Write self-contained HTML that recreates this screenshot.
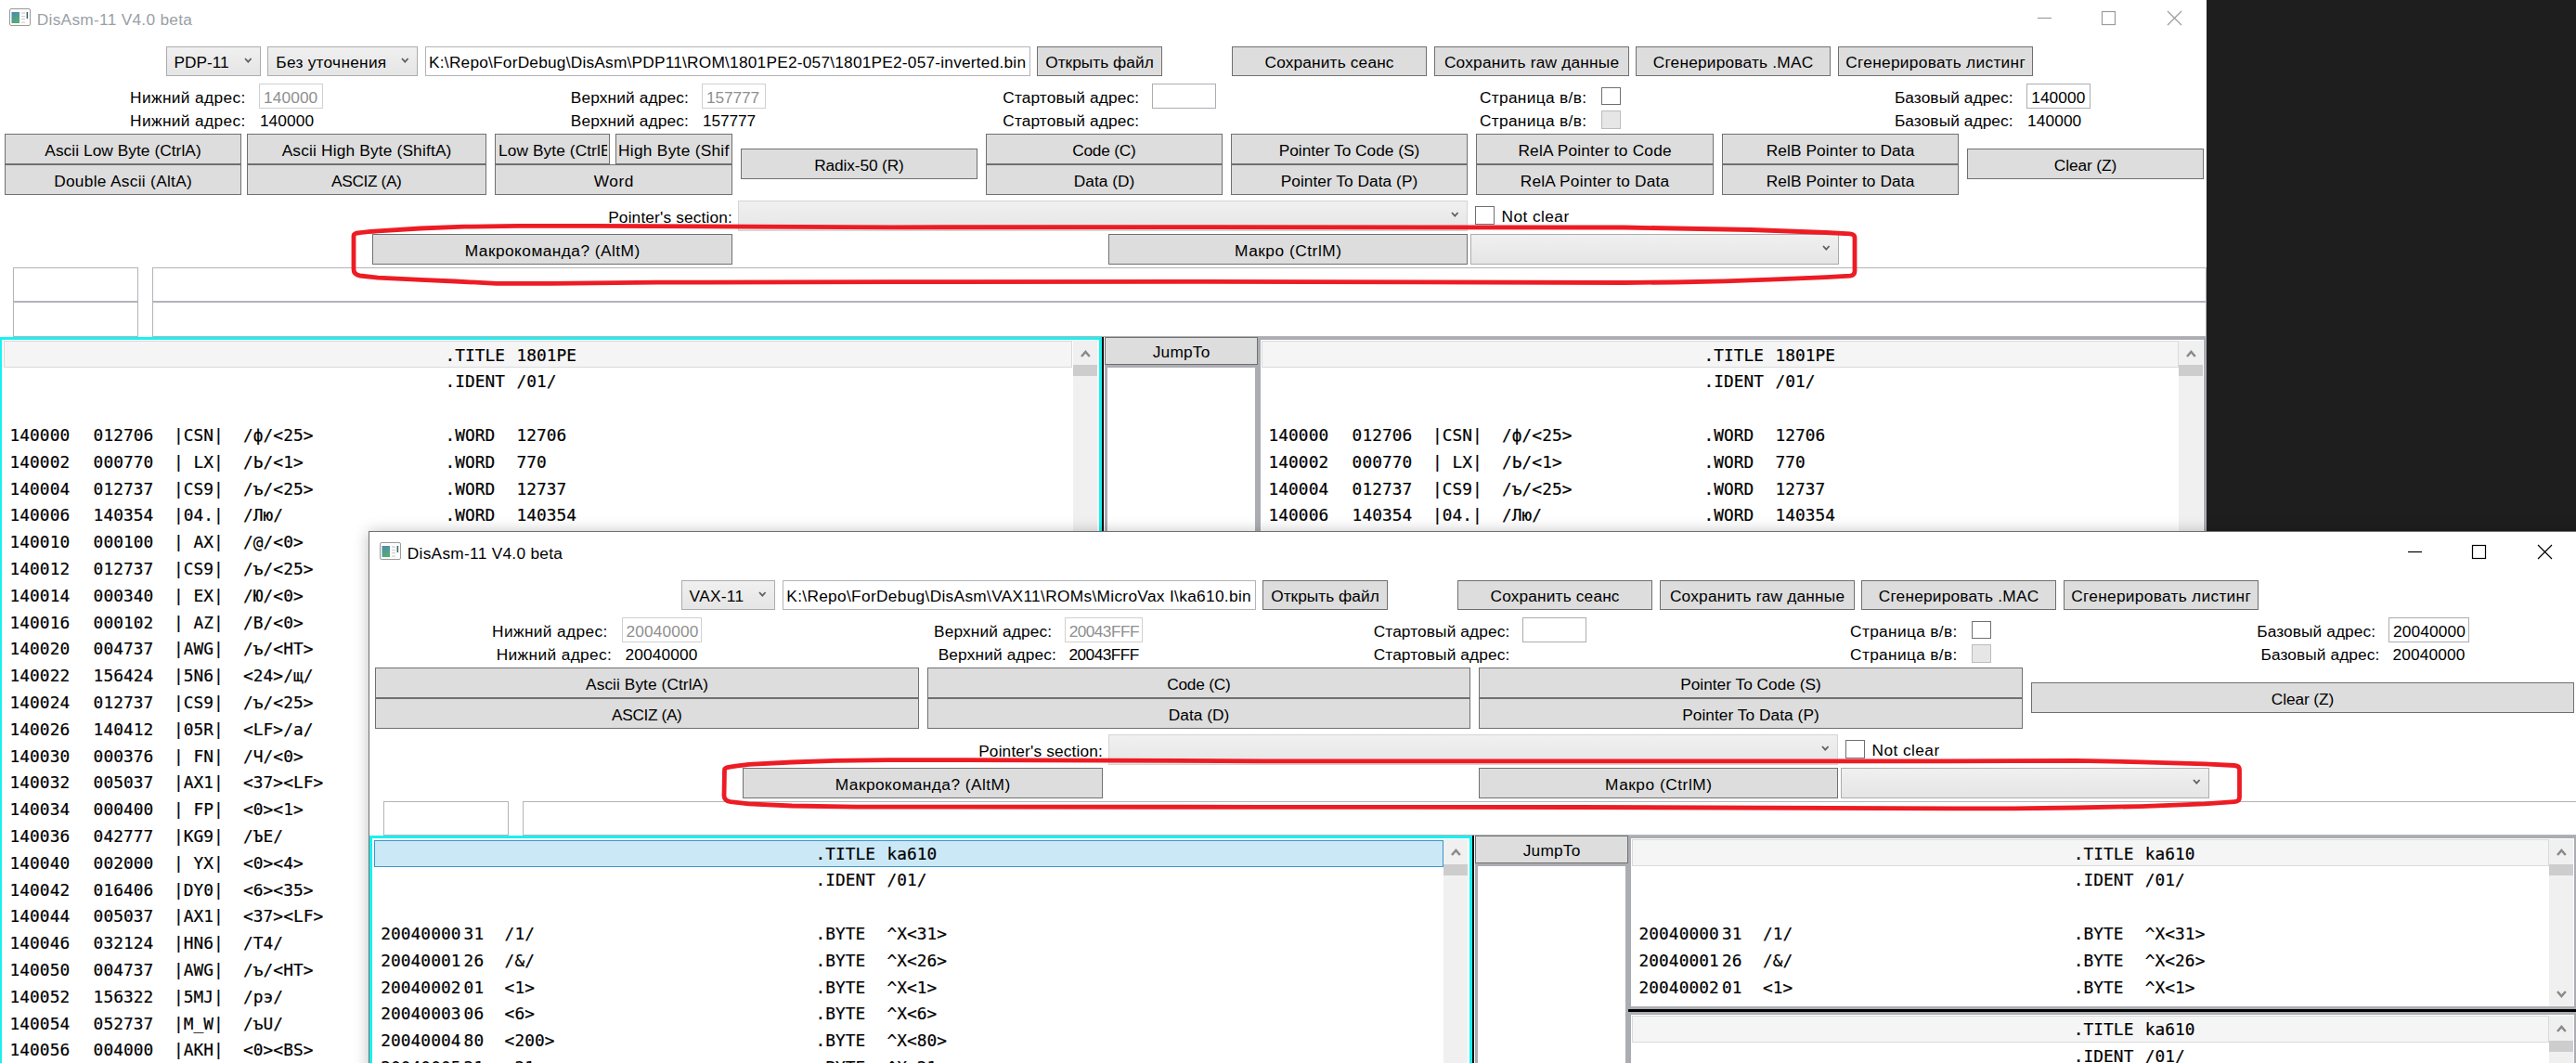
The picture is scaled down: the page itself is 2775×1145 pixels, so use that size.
<!DOCTYPE html>
<html><head><meta charset="utf-8"><title>DisAsm-11 V4.0 beta</title>
<style>
html,body{margin:0;padding:0;background:#1e1e1e;}
#root{position:relative;width:2775px;height:1145px;overflow:hidden;font-family:'Liberation Sans',sans-serif;font-size:17.3px;}
#root div,#root svg,#root span.t{position:absolute;}
span.t{white-space:pre;color:#000;line-height:22px;height:22px;font-size:17.3px;}
span.m{font-family:'DejaVu Sans Mono',monospace;font-size:17.8px;line-height:23px;height:23px;letter-spacing:0.084px;-webkit-text-stroke:0.2px #000;}
</style></head><body><div id="root">
<div style="left:0px;top:0px;width:2775px;height:1145px;background:#1e1e1e;"></div>
<div style="left:0px;top:0px;width:2377px;height:573px;background:#fff;"></div>
<div style="left:0px;top:573px;width:398px;height:572px;background:#fff;"></div>
<svg style="left:10px;top:9px;width:24px;height:20px" viewBox="0 0 24 20">
<defs><linearGradient id="g0" x1="0" y1="0" x2="0.4" y2="1"><stop offset="0" stop-color="#4f86b8"/><stop offset="1" stop-color="#56ab74"/></linearGradient></defs>
<rect x="0.5" y="0.5" width="22" height="18" rx="1.5" fill="#fdfdfd" stroke="#9a9a9a"/>
<rect x="2.5" y="4" width="8.5" height="12" fill="url(#g0)"/>
<rect x="13" y="4.5" width="4" height="1.2" fill="#c9c9c9"/><rect x="13" y="8" width="4" height="1.2" fill="#d4cccc"/><rect x="13" y="11" width="4" height="1.2" fill="#dccccc"/><rect x="13" y="14.5" width="4" height="1.2" fill="#d0d0d0"/>
<rect x="18.6" y="4" width="1.5" height="7" fill="#2a686e"/>
</svg>
<span class="t" style="top:10px;color:#9a9fa6;letter-spacing:0.283px;left:39.80px;">DisAsm-11 V4.0 beta</span>
<svg style="left:2190px;top:8px;width:170px;height:24px" viewBox="0 0 170 24">
<path d="M5 11.5 H20" stroke="#9b9b9b" stroke-width="1.2" fill="none"/>
<rect x="74.5" y="4.5" width="14" height="14" stroke="#9b9b9b" stroke-width="1.2" fill="none"/>
<path d="M145 4 L160 19 M160 4 L145 19" stroke="#9b9b9b" stroke-width="1.2" fill="none"/>
</svg>
<div style="left:179px;top:50px;width:102px;height:32px;background:linear-gradient(#f0f0f0,#e5e5e5);border:1px solid #acacac;box-sizing:border-box;"></div>
<svg style="left:260.5px;top:59.9px;width:12.6px;height:9.6px" viewBox="260.5 59.9 12.6 9.6"><path d="M263.5 62.9 L266.8 66.5 L270.1 62.9" fill="none" stroke="#606060" stroke-width="1.8"/></svg>
<span class="t" style="top:56px;letter-spacing:-0.022px;left:187.60px;">PDP-11</span>
<div style="left:288px;top:50px;width:162px;height:32px;background:linear-gradient(#f0f0f0,#e5e5e5);border:1px solid #acacac;box-sizing:border-box;"></div>
<svg style="left:429.5px;top:59.9px;width:12.6px;height:9.6px" viewBox="429.5 59.9 12.6 9.6"><path d="M432.5 62.9 L435.8 66.5 L439.1 62.9" fill="none" stroke="#606060" stroke-width="1.8"/></svg>
<span class="t" style="top:56px;letter-spacing:0.276px;left:297.30px;">Без уточнения</span>
<div style="left:458px;top:50px;width:652px;height:32px;background:#fff;border:1px solid #b2b4ba;box-sizing:border-box;"></div>
<span class="t" style="top:56px;letter-spacing:0.218px;left:462.10px;">K:\Repo\ForDebug\DisAsm\PDP11\ROM\1801PE2-057\1801PE2-057-inverted.bin</span>
<div style="left:1117px;top:50px;width:135px;height:32px;background:#dddddd;border:1px solid #707070;box-sizing:border-box;"></div>
<span class="t" style="top:56px;letter-spacing:0.029px;left:1117px;width:135px;text-align:center;text-indent:0.029px;">Открыть файл</span>
<div style="left:1327px;top:50px;width:210px;height:32px;background:#dddddd;border:1px solid #707070;box-sizing:border-box;"></div>
<span class="t" style="top:56px;letter-spacing:0.164px;left:1327px;width:210px;text-align:center;text-indent:0.164px;">Сохранить сеанс</span>
<div style="left:1545px;top:50px;width:210px;height:32px;background:#dddddd;border:1px solid #707070;box-sizing:border-box;"></div>
<span class="t" style="top:56px;letter-spacing:0.213px;left:1545px;width:210px;text-align:center;text-indent:0.213px;">Сохранить raw данные</span>
<div style="left:1762px;top:50px;width:210px;height:32px;background:#dddddd;border:1px solid #707070;box-sizing:border-box;"></div>
<span class="t" style="top:56px;letter-spacing:0.211px;left:1762px;width:210px;text-align:center;text-indent:0.211px;">Сгенерировать .MAC</span>
<div style="left:1980px;top:50px;width:210px;height:32px;background:#dddddd;border:1px solid #707070;box-sizing:border-box;"></div>
<span class="t" style="top:56px;letter-spacing:0.305px;left:1980px;width:210px;text-align:center;text-indent:0.305px;">Сгенерировать листинг</span>
<span class="t" style="top:94px;letter-spacing:0.377px;left:140.10px;">Нижний адрес:</span>
<span class="t" style="top:119px;letter-spacing:0.377px;left:140.10px;">Нижний адрес:</span>
<div style="left:279px;top:90px;width:69px;height:27px;background:#fff;border:1px solid #d0d0d0;box-sizing:border-box;"></div>
<span class="t" style="top:94px;color:#8f8f8f;letter-spacing:0.088px;left:284.10px;">140000</span>
<span class="t" style="top:119px;letter-spacing:0.088px;left:279.90px;">140000</span>
<span class="t" style="top:94px;letter-spacing:0.142px;left:614.80px;">Верхний адрес:</span>
<span class="t" style="top:119px;letter-spacing:0.142px;left:614.80px;">Верхний адрес:</span>
<div style="left:756px;top:90px;width:69px;height:27px;background:#fff;border:1px solid #d0d0d0;box-sizing:border-box;"></div>
<span class="t" style="top:94px;color:#8f8f8f;letter-spacing:-0.112px;left:760.90px;">157777</span>
<span class="t" style="top:119px;letter-spacing:-0.112px;left:756.90px;">157777</span>
<span class="t" style="top:94px;letter-spacing:0.125px;left:1080.30px;">Стартовый адрес:</span>
<span class="t" style="top:119px;letter-spacing:0.125px;left:1080.30px;">Стартовый адрес:</span>
<div style="left:1241px;top:90px;width:69px;height:27px;background:#fff;border:1px solid #abadb3;box-sizing:border-box;"></div>
<span class="t" style="top:94px;letter-spacing:0.339px;left:1593.90px;">Страница в/в:</span>
<span class="t" style="top:119px;letter-spacing:0.339px;left:1593.90px;">Страница в/в:</span>
<div style="left:1725px;top:94px;width:21px;height:19px;background:#fff;border:1px solid #707070;box-sizing:border-box;"></div>
<div style="left:1725px;top:119px;width:21px;height:20px;background:#e6e6e6;border:1px solid #bcbcbc;box-sizing:border-box;"></div>
<span class="t" style="top:94px;letter-spacing:0.092px;left:2040.90px;">Базовый адрес:</span>
<span class="t" style="top:119px;letter-spacing:0.092px;left:2040.90px;">Базовый адрес:</span>
<div style="left:2183px;top:90px;width:69px;height:27px;background:#fff;border:1px solid #abadb3;box-sizing:border-box;"></div>
<span class="t" style="top:94px;letter-spacing:0.088px;left:2188.20px;">140000</span>
<span class="t" style="top:119px;letter-spacing:0.088px;left:2184.10px;">140000</span>
<div style="left:5px;top:144px;width:255px;height:33px;background:#dddddd;border:1px solid #707070;box-sizing:border-box;"></div>
<span class="t" style="top:151px;letter-spacing:0.059px;left:5px;width:255px;text-align:center;text-indent:0.059px;">Ascii Low Byte (CtrlA)</span>
<div style="left:5px;top:177px;width:255px;height:33px;background:#dddddd;border:1px solid #707070;box-sizing:border-box;"></div>
<span class="t" style="top:184px;letter-spacing:0.310px;left:5px;width:255px;text-align:center;text-indent:0.310px;">Double Ascii (AltA)</span>
<div style="left:266px;top:144px;width:258px;height:33px;background:#dddddd;border:1px solid #707070;box-sizing:border-box;"></div>
<span class="t" style="top:151px;letter-spacing:0.177px;left:266px;width:258px;text-align:center;text-indent:0.177px;">Ascii High Byte (ShiftA)</span>
<div style="left:266px;top:177px;width:258px;height:33px;background:#dddddd;border:1px solid #707070;box-sizing:border-box;"></div>
<span class="t" style="top:184px;letter-spacing:-0.370px;left:266px;width:258px;text-align:center;text-indent:-0.370px;">ASCIZ (A)</span>
<div style="left:533px;top:144px;width:124px;height:33px;background:#dddddd;border:1px solid #707070;box-sizing:border-box;"></div>
<span class="t" style="top:151px;letter-spacing:0.100px;left:537.00px;width:117.3px;overflow:hidden;">Low Byte (CtrlB)</span>
<div style="left:663px;top:144px;width:126px;height:33px;background:#dddddd;border:1px solid #707070;box-sizing:border-box;"></div>
<span class="t" style="top:151px;letter-spacing:0.281px;left:666.10px;width:120.2px;overflow:hidden;">High Byte (ShiftB)</span>
<div style="left:533px;top:177px;width:256px;height:33px;background:#dddddd;border:1px solid #707070;box-sizing:border-box;"></div>
<span class="t" style="top:184px;letter-spacing:0.554px;left:533px;width:256px;text-align:center;text-indent:0.554px;">Word</span>
<div style="left:798px;top:160px;width:255px;height:33px;background:#dddddd;border:1px solid #707070;box-sizing:border-box;"></div>
<span class="t" style="top:167px;letter-spacing:-0.129px;left:798px;width:255px;text-align:center;text-indent:-0.129px;">Radix-50 (R)</span>
<div style="left:1062px;top:144px;width:255px;height:33px;background:#dddddd;border:1px solid #707070;box-sizing:border-box;"></div>
<span class="t" style="top:151px;letter-spacing:-0.214px;left:1062px;width:255px;text-align:center;text-indent:-0.214px;">Code (C)</span>
<div style="left:1062px;top:177px;width:255px;height:33px;background:#dddddd;border:1px solid #707070;box-sizing:border-box;"></div>
<span class="t" style="top:184px;left:1062px;width:255px;text-align:center;">Data (D)</span>
<div style="left:1326px;top:144px;width:255px;height:33px;background:#dddddd;border:1px solid #707070;box-sizing:border-box;"></div>
<span class="t" style="top:151px;letter-spacing:0.013px;left:1326px;width:255px;text-align:center;text-indent:0.013px;">Pointer To Code (S)</span>
<div style="left:1326px;top:177px;width:255px;height:33px;background:#dddddd;border:1px solid #707070;box-sizing:border-box;"></div>
<span class="t" style="top:184px;letter-spacing:0.050px;left:1326px;width:255px;text-align:center;text-indent:0.050px;">Pointer To Data (P)</span>
<div style="left:1590px;top:144px;width:256px;height:33px;background:#dddddd;border:1px solid #707070;box-sizing:border-box;"></div>
<span class="t" style="top:151px;letter-spacing:0.200px;left:1590px;width:256px;text-align:center;text-indent:0.200px;">RelA Pointer to Code</span>
<div style="left:1590px;top:177px;width:256px;height:33px;background:#dddddd;border:1px solid #707070;box-sizing:border-box;"></div>
<span class="t" style="top:184px;letter-spacing:0.201px;left:1590px;width:256px;text-align:center;text-indent:0.201px;">RelA Pointer to Data</span>
<div style="left:1855px;top:144px;width:255px;height:33px;background:#dddddd;border:1px solid #707070;box-sizing:border-box;"></div>
<span class="t" style="top:151px;letter-spacing:0.113px;left:1855px;width:255px;text-align:center;text-indent:0.113px;">RelB Pointer to Data</span>
<div style="left:1855px;top:177px;width:255px;height:33px;background:#dddddd;border:1px solid #707070;box-sizing:border-box;"></div>
<span class="t" style="top:184px;letter-spacing:0.113px;left:1855px;width:255px;text-align:center;text-indent:0.113px;">RelB Pointer to Data</span>
<div style="left:2119px;top:160px;width:255px;height:33px;background:#dddddd;border:1px solid #707070;box-sizing:border-box;"></div>
<span class="t" style="top:167px;letter-spacing:-0.108px;left:2119px;width:255px;text-align:center;text-indent:-0.108px;">Clear (Z)</span>
<span class="t" style="top:223px;letter-spacing:0.152px;left:655.20px;">Pointer&#x27;s section:</span>
<div style="left:795px;top:216px;width:786px;height:33px;background:linear-gradient(#f0f0f0,#e6e6e6);border:1px solid #d4d4d4;box-sizing:border-box;"></div>
<svg style="left:1560.5px;top:226.4px;width:12.6px;height:9.6px" viewBox="1560.5 226.4 12.6 9.6"><path d="M1563.5 229.4 L1566.8 233 L1570.1 229.4" fill="none" stroke="#606060" stroke-width="1.8"/></svg>
<div style="left:1589px;top:222px;width:21px;height:20px;background:#fff;border:1px solid #707070;box-sizing:border-box;"></div>
<span class="t" style="top:222px;letter-spacing:0.427px;left:1617.60px;">Not clear</span>
<div style="left:401px;top:252px;width:388px;height:33px;background:#dddddd;border:1px solid #707070;box-sizing:border-box;"></div>
<span class="t" style="top:259px;letter-spacing:0.466px;left:401px;width:388px;text-align:center;text-indent:0.466px;">Макрокоманда? (AltM)</span>
<div style="left:1194px;top:252px;width:387px;height:33px;background:#dddddd;border:1px solid #707070;box-sizing:border-box;"></div>
<span class="t" style="top:259px;letter-spacing:0.532px;left:1194px;width:387px;text-align:center;text-indent:0.532px;">Макро (CtrlM)</span>
<div style="left:1584px;top:252px;width:397px;height:33px;background:linear-gradient(#f0f0f0,#e5e5e5);border:1px solid #acacac;box-sizing:border-box;"></div>
<svg style="left:1960.5px;top:262.4px;width:12.6px;height:9.6px" viewBox="1960.5 262.4 12.6 9.6"><path d="M1963.5 265.4 L1966.8 269 L1970.1 265.4" fill="none" stroke="#606060" stroke-width="1.8"/></svg>
<div style="left:14px;top:288px;width:135px;height:37px;background:#fff;border:1px solid #b2b4ba;box-sizing:border-box;"></div>
<div style="left:14px;top:325px;width:135px;height:38px;background:#fff;border:1px solid #b2b4ba;box-sizing:border-box;"></div>
<div style="left:164px;top:288px;width:2213px;height:37px;background:#fff;border:1px solid #b2b4ba;box-sizing:border-box;"></div>
<div style="left:164px;top:325px;width:2213px;height:38px;background:#fff;border:1px solid #b2b4ba;box-sizing:border-box;"></div>
<div style="left:-1px;top:363px;width:1188px;height:782px;background:#fff;border:3px solid #1af0f0;box-sizing:border-box;border-bottom:none;"></div>
<div style="left:1187px;top:363px;width:2px;height:782px;background:#000;"></div>
<div style="left:4px;top:367px;width:1151px;height:29px;background:#f5f5f5;border:1px solid #dadada;box-sizing:border-box;"></div>
<div style="left:1156px;top:367px;width:26px;height:779px;background:#f0f0f0;"></div>
<svg style="left:1161.6px;top:375.6px;width:14.8px;height:11px" viewBox="1161.6 375.6 14.8 11"><path d="M1164.6 383.6 L1169 378.6 L1173.4 383.6" fill="none" stroke="#8a8a8a" stroke-width="2.5"/></svg>
<div style="left:1156px;top:393px;width:26px;height:12px;background:#cdcdcd;"></div>
<span class="t m" style="top:371px;left:479.40px;">.TITLE</span>
<span class="t m" style="top:371px;left:556.40px;">1801PE</span>
<span class="t m" style="top:399px;left:479.40px;">.IDENT</span>
<span class="t m" style="top:399px;left:556.40px;">/01/</span>
<span class="t m" style="top:457px;left:10.50px;">140000</span>
<span class="t m" style="top:457px;left:100.60px;">012706</span>
<span class="t m" style="top:457px;left:186.90px;">|CSN|</span>
<span class="t m" style="top:457px;left:262.00px;">/ф/&lt;25&gt;</span>
<span class="t m" style="top:457px;left:479.40px;">.WORD</span>
<span class="t m" style="top:457px;left:556.40px;">12706</span>
<span class="t m" style="top:486px;left:10.50px;">140002</span>
<span class="t m" style="top:486px;left:100.60px;">000770</span>
<span class="t m" style="top:486px;left:186.90px;">| LX|</span>
<span class="t m" style="top:486px;left:262.00px;">/Ь/&lt;1&gt;</span>
<span class="t m" style="top:486px;left:479.40px;">.WORD</span>
<span class="t m" style="top:486px;left:556.40px;">770</span>
<span class="t m" style="top:515px;left:10.50px;">140004</span>
<span class="t m" style="top:515px;left:100.60px;">012737</span>
<span class="t m" style="top:515px;left:186.90px;">|CS9|</span>
<span class="t m" style="top:515px;left:262.00px;">/ъ/&lt;25&gt;</span>
<span class="t m" style="top:515px;left:479.40px;">.WORD</span>
<span class="t m" style="top:515px;left:556.40px;">12737</span>
<span class="t m" style="top:543px;left:10.50px;">140006</span>
<span class="t m" style="top:543px;left:100.60px;">140354</span>
<span class="t m" style="top:543px;left:186.90px;">|04.|</span>
<span class="t m" style="top:543px;left:262.00px;">/Лю/</span>
<span class="t m" style="top:543px;left:479.40px;">.WORD</span>
<span class="t m" style="top:543px;left:556.40px;">140354</span>
<span class="t m" style="top:572px;left:10.50px;">140010</span>
<span class="t m" style="top:572px;left:100.60px;">000100</span>
<span class="t m" style="top:572px;left:186.90px;">| AX|</span>
<span class="t m" style="top:572px;left:262.00px;">/@/&lt;0&gt;</span>
<span class="t m" style="top:572px;left:479.40px;">.WORD</span>
<span class="t m" style="top:572px;left:556.40px;">100</span>
<span class="t m" style="top:601px;left:10.50px;">140012</span>
<span class="t m" style="top:601px;left:100.60px;">012737</span>
<span class="t m" style="top:601px;left:186.90px;">|CS9|</span>
<span class="t m" style="top:601px;left:262.00px;">/ъ/&lt;25&gt;</span>
<span class="t m" style="top:601px;left:479.40px;">.WORD</span>
<span class="t m" style="top:601px;left:556.40px;">12737</span>
<span class="t m" style="top:630px;left:10.50px;">140014</span>
<span class="t m" style="top:630px;left:100.60px;">000340</span>
<span class="t m" style="top:630px;left:186.90px;">| EX|</span>
<span class="t m" style="top:630px;left:262.00px;">/Ю/&lt;0&gt;</span>
<span class="t m" style="top:630px;left:479.40px;">.WORD</span>
<span class="t m" style="top:630px;left:556.40px;">340</span>
<span class="t m" style="top:659px;left:10.50px;">140016</span>
<span class="t m" style="top:659px;left:100.60px;">000102</span>
<span class="t m" style="top:659px;left:186.90px;">| AZ|</span>
<span class="t m" style="top:659px;left:262.00px;">/B/&lt;0&gt;</span>
<span class="t m" style="top:659px;left:479.40px;">.WORD</span>
<span class="t m" style="top:659px;left:556.40px;">102</span>
<span class="t m" style="top:687px;left:10.50px;">140020</span>
<span class="t m" style="top:687px;left:100.60px;">004737</span>
<span class="t m" style="top:687px;left:186.90px;">|AWG|</span>
<span class="t m" style="top:687px;left:262.00px;">/ъ/&lt;HT&gt;</span>
<span class="t m" style="top:687px;left:479.40px;">.WORD</span>
<span class="t m" style="top:687px;left:556.40px;">4737</span>
<span class="t m" style="top:716px;left:10.50px;">140022</span>
<span class="t m" style="top:716px;left:100.60px;">156424</span>
<span class="t m" style="top:716px;left:186.90px;">|5N6|</span>
<span class="t m" style="top:716px;left:262.00px;">&lt;24&gt;/щ/</span>
<span class="t m" style="top:716px;left:479.40px;">.WORD</span>
<span class="t m" style="top:716px;left:556.40px;">156424</span>
<span class="t m" style="top:745px;left:10.50px;">140024</span>
<span class="t m" style="top:745px;left:100.60px;">012737</span>
<span class="t m" style="top:745px;left:186.90px;">|CS9|</span>
<span class="t m" style="top:745px;left:262.00px;">/ъ/&lt;25&gt;</span>
<span class="t m" style="top:745px;left:479.40px;">.WORD</span>
<span class="t m" style="top:745px;left:556.40px;">12737</span>
<span class="t m" style="top:774px;left:10.50px;">140026</span>
<span class="t m" style="top:774px;left:100.60px;">140412</span>
<span class="t m" style="top:774px;left:186.90px;">|05R|</span>
<span class="t m" style="top:774px;left:262.00px;">&lt;LF&gt;/a/</span>
<span class="t m" style="top:774px;left:479.40px;">.WORD</span>
<span class="t m" style="top:774px;left:556.40px;">140412</span>
<span class="t m" style="top:803px;left:10.50px;">140030</span>
<span class="t m" style="top:803px;left:100.60px;">000376</span>
<span class="t m" style="top:803px;left:186.90px;">| FN|</span>
<span class="t m" style="top:803px;left:262.00px;">/Ч/&lt;0&gt;</span>
<span class="t m" style="top:803px;left:479.40px;">.WORD</span>
<span class="t m" style="top:803px;left:556.40px;">376</span>
<span class="t m" style="top:831px;left:10.50px;">140032</span>
<span class="t m" style="top:831px;left:100.60px;">005037</span>
<span class="t m" style="top:831px;left:186.90px;">|AX1|</span>
<span class="t m" style="top:831px;left:262.00px;">&lt;37&gt;&lt;LF&gt;</span>
<span class="t m" style="top:831px;left:479.40px;">.WORD</span>
<span class="t m" style="top:831px;left:556.40px;">5037</span>
<span class="t m" style="top:860px;left:10.50px;">140034</span>
<span class="t m" style="top:860px;left:100.60px;">000400</span>
<span class="t m" style="top:860px;left:186.90px;">| FP|</span>
<span class="t m" style="top:860px;left:262.00px;">&lt;0&gt;&lt;1&gt;</span>
<span class="t m" style="top:860px;left:479.40px;">.WORD</span>
<span class="t m" style="top:860px;left:556.40px;">400</span>
<span class="t m" style="top:889px;left:10.50px;">140036</span>
<span class="t m" style="top:889px;left:100.60px;">042777</span>
<span class="t m" style="top:889px;left:186.90px;">|KG9|</span>
<span class="t m" style="top:889px;left:262.00px;">/ЪE/</span>
<span class="t m" style="top:889px;left:479.40px;">.WORD</span>
<span class="t m" style="top:889px;left:556.40px;">42777</span>
<span class="t m" style="top:918px;left:10.50px;">140040</span>
<span class="t m" style="top:918px;left:100.60px;">002000</span>
<span class="t m" style="top:918px;left:186.90px;">| YX|</span>
<span class="t m" style="top:918px;left:262.00px;">&lt;0&gt;&lt;4&gt;</span>
<span class="t m" style="top:918px;left:479.40px;">.WORD</span>
<span class="t m" style="top:918px;left:556.40px;">2000</span>
<span class="t m" style="top:947px;left:10.50px;">140042</span>
<span class="t m" style="top:947px;left:100.60px;">016406</span>
<span class="t m" style="top:947px;left:186.90px;">|DY0|</span>
<span class="t m" style="top:947px;left:262.00px;">&lt;6&gt;&lt;35&gt;</span>
<span class="t m" style="top:947px;left:479.40px;">.WORD</span>
<span class="t m" style="top:947px;left:556.40px;">16406</span>
<span class="t m" style="top:975px;left:10.50px;">140044</span>
<span class="t m" style="top:975px;left:100.60px;">005037</span>
<span class="t m" style="top:975px;left:186.90px;">|AX1|</span>
<span class="t m" style="top:975px;left:262.00px;">&lt;37&gt;&lt;LF&gt;</span>
<span class="t m" style="top:975px;left:479.40px;">.WORD</span>
<span class="t m" style="top:975px;left:556.40px;">5037</span>
<span class="t m" style="top:1004px;left:10.50px;">140046</span>
<span class="t m" style="top:1004px;left:100.60px;">032124</span>
<span class="t m" style="top:1004px;left:186.90px;">|HN6|</span>
<span class="t m" style="top:1004px;left:262.00px;">/T4/</span>
<span class="t m" style="top:1004px;left:479.40px;">.WORD</span>
<span class="t m" style="top:1004px;left:556.40px;">32124</span>
<span class="t m" style="top:1033px;left:10.50px;">140050</span>
<span class="t m" style="top:1033px;left:100.60px;">004737</span>
<span class="t m" style="top:1033px;left:186.90px;">|AWG|</span>
<span class="t m" style="top:1033px;left:262.00px;">/ъ/&lt;HT&gt;</span>
<span class="t m" style="top:1033px;left:479.40px;">.WORD</span>
<span class="t m" style="top:1033px;left:556.40px;">4737</span>
<span class="t m" style="top:1062px;left:10.50px;">140052</span>
<span class="t m" style="top:1062px;left:100.60px;">156322</span>
<span class="t m" style="top:1062px;left:186.90px;">|5MJ|</span>
<span class="t m" style="top:1062px;left:262.00px;">/рэ/</span>
<span class="t m" style="top:1062px;left:479.40px;">.WORD</span>
<span class="t m" style="top:1062px;left:556.40px;">156322</span>
<span class="t m" style="top:1091px;left:10.50px;">140054</span>
<span class="t m" style="top:1091px;left:100.60px;">052737</span>
<span class="t m" style="top:1091px;left:186.90px;">|M_W|</span>
<span class="t m" style="top:1091px;left:262.00px;">/ъU/</span>
<span class="t m" style="top:1091px;left:479.40px;">.WORD</span>
<span class="t m" style="top:1091px;left:556.40px;">52737</span>
<span class="t m" style="top:1119px;left:10.50px;">140056</span>
<span class="t m" style="top:1119px;left:100.60px;">004000</span>
<span class="t m" style="top:1119px;left:186.90px;">|AKH|</span>
<span class="t m" style="top:1119px;left:262.00px;">&lt;0&gt;&lt;BS&gt;</span>
<span class="t m" style="top:1119px;left:479.40px;">.WORD</span>
<span class="t m" style="top:1119px;left:556.40px;">4000</span>
<span class="t m" style="top:1148px;left:10.50px;">140060</span>
<span class="t m" style="top:1148px;left:100.60px;">177564</span>
<span class="t m" style="top:1148px;left:186.90px;">|8K.|</span>
<span class="t m" style="top:1148px;left:262.00px;">/t/&lt;377&gt;</span>
<span class="t m" style="top:1148px;left:479.40px;">.WORD</span>
<span class="t m" style="top:1148px;left:556.40px;">177564</span>
<div style="left:1190px;top:393px;width:165px;height:752px;background:#fff;border:3px solid #abadb3;box-sizing:border-box;border-bottom:none;"></div>
<div style="left:1190px;top:363px;width:165px;height:30px;background:#dddddd;border:1px solid #707070;box-sizing:border-box;"></div>
<span class="t" style="top:368px;letter-spacing:0.214px;left:1190px;width:165px;text-align:center;text-indent:0.214px;">JumpTo</span>
<div style="left:1355px;top:363px;width:1022px;height:782px;background:#fff;border:3px solid #abadb3;box-sizing:border-box;border-bottom:none;"></div>
<div style="left:1359px;top:367px;width:988px;height:29px;background:#f5f5f5;border:1px solid #dadada;box-sizing:border-box;"></div>
<div style="left:2347px;top:367px;width:26px;height:779px;background:#f0f0f0;"></div>
<svg style="left:2352.6px;top:375.6px;width:14.8px;height:11px" viewBox="2352.6 375.6 14.8 11"><path d="M2355.6 383.6 L2360 378.6 L2364.4 383.6" fill="none" stroke="#8a8a8a" stroke-width="2.5"/></svg>
<div style="left:2347px;top:393px;width:26px;height:12px;background:#cdcdcd;"></div>
<span class="t m" style="top:371px;left:1835.40px;">.TITLE</span>
<span class="t m" style="top:371px;left:1912.40px;">1801PE</span>
<span class="t m" style="top:399px;left:1835.40px;">.IDENT</span>
<span class="t m" style="top:399px;left:1912.40px;">/01/</span>
<span class="t m" style="top:457px;left:1366.50px;">140000</span>
<span class="t m" style="top:457px;left:1456.60px;">012706</span>
<span class="t m" style="top:457px;left:1542.90px;">|CSN|</span>
<span class="t m" style="top:457px;left:1618.00px;">/ф/&lt;25&gt;</span>
<span class="t m" style="top:457px;left:1835.40px;">.WORD</span>
<span class="t m" style="top:457px;left:1912.40px;">12706</span>
<span class="t m" style="top:486px;left:1366.50px;">140002</span>
<span class="t m" style="top:486px;left:1456.60px;">000770</span>
<span class="t m" style="top:486px;left:1542.90px;">| LX|</span>
<span class="t m" style="top:486px;left:1618.00px;">/Ь/&lt;1&gt;</span>
<span class="t m" style="top:486px;left:1835.40px;">.WORD</span>
<span class="t m" style="top:486px;left:1912.40px;">770</span>
<span class="t m" style="top:515px;left:1366.50px;">140004</span>
<span class="t m" style="top:515px;left:1456.60px;">012737</span>
<span class="t m" style="top:515px;left:1542.90px;">|CS9|</span>
<span class="t m" style="top:515px;left:1618.00px;">/ъ/&lt;25&gt;</span>
<span class="t m" style="top:515px;left:1835.40px;">.WORD</span>
<span class="t m" style="top:515px;left:1912.40px;">12737</span>
<span class="t m" style="top:543px;left:1366.50px;">140006</span>
<span class="t m" style="top:543px;left:1456.60px;">140354</span>
<span class="t m" style="top:543px;left:1542.90px;">|04.|</span>
<span class="t m" style="top:543px;left:1618.00px;">/Лю/</span>
<span class="t m" style="top:543px;left:1835.40px;">.WORD</span>
<span class="t m" style="top:543px;left:1912.40px;">140354</span>
<span class="t m" style="top:572px;left:1366.50px;">140010</span>
<span class="t m" style="top:572px;left:1456.60px;">000100</span>
<span class="t m" style="top:572px;left:1542.90px;">| AX|</span>
<span class="t m" style="top:572px;left:1618.00px;">/@/&lt;0&gt;</span>
<span class="t m" style="top:572px;left:1835.40px;">.WORD</span>
<span class="t m" style="top:572px;left:1912.40px;">100</span>
<span class="t m" style="top:601px;left:1366.50px;">140012</span>
<span class="t m" style="top:601px;left:1456.60px;">012737</span>
<span class="t m" style="top:601px;left:1542.90px;">|CS9|</span>
<span class="t m" style="top:601px;left:1618.00px;">/ъ/&lt;25&gt;</span>
<span class="t m" style="top:601px;left:1835.40px;">.WORD</span>
<span class="t m" style="top:601px;left:1912.40px;">12737</span>
<span class="t m" style="top:630px;left:1366.50px;">140014</span>
<span class="t m" style="top:630px;left:1456.60px;">000340</span>
<span class="t m" style="top:630px;left:1542.90px;">| EX|</span>
<span class="t m" style="top:630px;left:1618.00px;">/Ю/&lt;0&gt;</span>
<span class="t m" style="top:630px;left:1835.40px;">.WORD</span>
<span class="t m" style="top:630px;left:1912.40px;">340</span>
<span class="t m" style="top:659px;left:1366.50px;">140016</span>
<span class="t m" style="top:659px;left:1456.60px;">000102</span>
<span class="t m" style="top:659px;left:1542.90px;">| AZ|</span>
<span class="t m" style="top:659px;left:1618.00px;">/B/&lt;0&gt;</span>
<span class="t m" style="top:659px;left:1835.40px;">.WORD</span>
<span class="t m" style="top:659px;left:1912.40px;">102</span>
<span class="t m" style="top:687px;left:1366.50px;">140020</span>
<span class="t m" style="top:687px;left:1456.60px;">004737</span>
<span class="t m" style="top:687px;left:1542.90px;">|AWG|</span>
<span class="t m" style="top:687px;left:1618.00px;">/ъ/&lt;HT&gt;</span>
<span class="t m" style="top:687px;left:1835.40px;">.WORD</span>
<span class="t m" style="top:687px;left:1912.40px;">4737</span>
<span class="t m" style="top:716px;left:1366.50px;">140022</span>
<span class="t m" style="top:716px;left:1456.60px;">156424</span>
<span class="t m" style="top:716px;left:1542.90px;">|5N6|</span>
<span class="t m" style="top:716px;left:1618.00px;">&lt;24&gt;/щ/</span>
<span class="t m" style="top:716px;left:1835.40px;">.WORD</span>
<span class="t m" style="top:716px;left:1912.40px;">156424</span>
<span class="t m" style="top:745px;left:1366.50px;">140024</span>
<span class="t m" style="top:745px;left:1456.60px;">012737</span>
<span class="t m" style="top:745px;left:1542.90px;">|CS9|</span>
<span class="t m" style="top:745px;left:1618.00px;">/ъ/&lt;25&gt;</span>
<span class="t m" style="top:745px;left:1835.40px;">.WORD</span>
<span class="t m" style="top:745px;left:1912.40px;">12737</span>
<span class="t m" style="top:774px;left:1366.50px;">140026</span>
<span class="t m" style="top:774px;left:1456.60px;">140412</span>
<span class="t m" style="top:774px;left:1542.90px;">|05R|</span>
<span class="t m" style="top:774px;left:1618.00px;">&lt;LF&gt;/a/</span>
<span class="t m" style="top:774px;left:1835.40px;">.WORD</span>
<span class="t m" style="top:774px;left:1912.40px;">140412</span>
<span class="t m" style="top:803px;left:1366.50px;">140030</span>
<span class="t m" style="top:803px;left:1456.60px;">000376</span>
<span class="t m" style="top:803px;left:1542.90px;">| FN|</span>
<span class="t m" style="top:803px;left:1618.00px;">/Ч/&lt;0&gt;</span>
<span class="t m" style="top:803px;left:1835.40px;">.WORD</span>
<span class="t m" style="top:803px;left:1912.40px;">376</span>
<span class="t m" style="top:831px;left:1366.50px;">140032</span>
<span class="t m" style="top:831px;left:1456.60px;">005037</span>
<span class="t m" style="top:831px;left:1542.90px;">|AX1|</span>
<span class="t m" style="top:831px;left:1618.00px;">&lt;37&gt;&lt;LF&gt;</span>
<span class="t m" style="top:831px;left:1835.40px;">.WORD</span>
<span class="t m" style="top:831px;left:1912.40px;">5037</span>
<span class="t m" style="top:860px;left:1366.50px;">140034</span>
<span class="t m" style="top:860px;left:1456.60px;">000400</span>
<span class="t m" style="top:860px;left:1542.90px;">| FP|</span>
<span class="t m" style="top:860px;left:1618.00px;">&lt;0&gt;&lt;1&gt;</span>
<span class="t m" style="top:860px;left:1835.40px;">.WORD</span>
<span class="t m" style="top:860px;left:1912.40px;">400</span>
<span class="t m" style="top:889px;left:1366.50px;">140036</span>
<span class="t m" style="top:889px;left:1456.60px;">042777</span>
<span class="t m" style="top:889px;left:1542.90px;">|KG9|</span>
<span class="t m" style="top:889px;left:1618.00px;">/ЪE/</span>
<span class="t m" style="top:889px;left:1835.40px;">.WORD</span>
<span class="t m" style="top:889px;left:1912.40px;">42777</span>
<span class="t m" style="top:918px;left:1366.50px;">140040</span>
<span class="t m" style="top:918px;left:1456.60px;">002000</span>
<span class="t m" style="top:918px;left:1542.90px;">| YX|</span>
<span class="t m" style="top:918px;left:1618.00px;">&lt;0&gt;&lt;4&gt;</span>
<span class="t m" style="top:918px;left:1835.40px;">.WORD</span>
<span class="t m" style="top:918px;left:1912.40px;">2000</span>
<span class="t m" style="top:947px;left:1366.50px;">140042</span>
<span class="t m" style="top:947px;left:1456.60px;">016406</span>
<span class="t m" style="top:947px;left:1542.90px;">|DY0|</span>
<span class="t m" style="top:947px;left:1618.00px;">&lt;6&gt;&lt;35&gt;</span>
<span class="t m" style="top:947px;left:1835.40px;">.WORD</span>
<span class="t m" style="top:947px;left:1912.40px;">16406</span>
<span class="t m" style="top:975px;left:1366.50px;">140044</span>
<span class="t m" style="top:975px;left:1456.60px;">005037</span>
<span class="t m" style="top:975px;left:1542.90px;">|AX1|</span>
<span class="t m" style="top:975px;left:1618.00px;">&lt;37&gt;&lt;LF&gt;</span>
<span class="t m" style="top:975px;left:1835.40px;">.WORD</span>
<span class="t m" style="top:975px;left:1912.40px;">5037</span>
<span class="t m" style="top:1004px;left:1366.50px;">140046</span>
<span class="t m" style="top:1004px;left:1456.60px;">032124</span>
<span class="t m" style="top:1004px;left:1542.90px;">|HN6|</span>
<span class="t m" style="top:1004px;left:1618.00px;">/T4/</span>
<span class="t m" style="top:1004px;left:1835.40px;">.WORD</span>
<span class="t m" style="top:1004px;left:1912.40px;">32124</span>
<span class="t m" style="top:1033px;left:1366.50px;">140050</span>
<span class="t m" style="top:1033px;left:1456.60px;">004737</span>
<span class="t m" style="top:1033px;left:1542.90px;">|AWG|</span>
<span class="t m" style="top:1033px;left:1618.00px;">/ъ/&lt;HT&gt;</span>
<span class="t m" style="top:1033px;left:1835.40px;">.WORD</span>
<span class="t m" style="top:1033px;left:1912.40px;">4737</span>
<span class="t m" style="top:1062px;left:1366.50px;">140052</span>
<span class="t m" style="top:1062px;left:1456.60px;">156322</span>
<span class="t m" style="top:1062px;left:1542.90px;">|5MJ|</span>
<span class="t m" style="top:1062px;left:1618.00px;">/рэ/</span>
<span class="t m" style="top:1062px;left:1835.40px;">.WORD</span>
<span class="t m" style="top:1062px;left:1912.40px;">156322</span>
<span class="t m" style="top:1091px;left:1366.50px;">140054</span>
<span class="t m" style="top:1091px;left:1456.60px;">052737</span>
<span class="t m" style="top:1091px;left:1542.90px;">|M_W|</span>
<span class="t m" style="top:1091px;left:1618.00px;">/ъU/</span>
<span class="t m" style="top:1091px;left:1835.40px;">.WORD</span>
<span class="t m" style="top:1091px;left:1912.40px;">52737</span>
<span class="t m" style="top:1119px;left:1366.50px;">140056</span>
<span class="t m" style="top:1119px;left:1456.60px;">004000</span>
<span class="t m" style="top:1119px;left:1542.90px;">|AKH|</span>
<span class="t m" style="top:1119px;left:1618.00px;">&lt;0&gt;&lt;BS&gt;</span>
<span class="t m" style="top:1119px;left:1835.40px;">.WORD</span>
<span class="t m" style="top:1119px;left:1912.40px;">4000</span>
<div style="left:397px;top:572px;width:2400px;height:600px;background:#fff;box-shadow:0 1px 15px rgba(0,0,0,.26);"></div>
<div style="left:397px;top:572px;width:2400px;height:600px;background:#fff;border:1px solid rgba(0,0,0,.56);box-sizing:border-box;"></div>
<svg style="left:409px;top:584px;width:24px;height:20px" viewBox="0 0 24 20">
<defs><linearGradient id="g399" x1="0" y1="0" x2="0.4" y2="1"><stop offset="0" stop-color="#4f86b8"/><stop offset="1" stop-color="#56ab74"/></linearGradient></defs>
<rect x="0.5" y="0.5" width="22" height="18" rx="1.5" fill="#fdfdfd" stroke="#9a9a9a"/>
<rect x="2.5" y="4" width="8.5" height="12" fill="url(#g399)"/>
<rect x="13" y="4.5" width="4" height="1.2" fill="#c9c9c9"/><rect x="13" y="8" width="4" height="1.2" fill="#d4cccc"/><rect x="13" y="11" width="4" height="1.2" fill="#dccccc"/><rect x="13" y="14.5" width="4" height="1.2" fill="#d0d0d0"/>
<rect x="18.6" y="4" width="1.5" height="7" fill="#2a686e"/>
</svg>
<span class="t" style="top:585px;letter-spacing:0.283px;left:438.80px;">DisAsm-11 V4.0 beta</span>
<svg style="left:2589px;top:583px;width:170px;height:24px" viewBox="0 0 170 24">
<path d="M5 11.5 H20" stroke="#000" stroke-width="1.2" fill="none"/>
<rect x="74.5" y="4.5" width="14" height="14" stroke="#000" stroke-width="1.2" fill="none"/>
<path d="M145 4 L160 19 M160 4 L145 19" stroke="#000" stroke-width="1.2" fill="none"/>
</svg>
<div style="left:734px;top:625px;width:101px;height:32px;background:linear-gradient(#f0f0f0,#e5e5e5);border:1px solid #acacac;box-sizing:border-box;"></div>
<svg style="left:814.5px;top:634.9px;width:12.6px;height:9.6px" viewBox="814.5 634.9 12.6 9.6"><path d="M817.5 637.9 L820.8 641.5 L824.1 637.9" fill="none" stroke="#606060" stroke-width="1.8"/></svg>
<span class="t" style="top:631px;letter-spacing:0.300px;left:742.60px;">VAX-11</span>
<div style="left:843px;top:625px;width:510px;height:32px;background:#fff;border:1px solid #b2b4ba;box-sizing:border-box;"></div>
<span class="t" style="top:631px;letter-spacing:0.320px;left:847.30px;">K:\Repo\ForDebug\DisAsm\VAX11\ROMs\MicroVax I\ka610.bin</span>
<div style="left:1360px;top:625px;width:135px;height:32px;background:#dddddd;border:1px solid #707070;box-sizing:border-box;"></div>
<span class="t" style="top:631px;letter-spacing:0.029px;left:1360px;width:135px;text-align:center;text-indent:0.029px;">Открыть файл</span>
<div style="left:1570px;top:625px;width:210px;height:32px;background:#dddddd;border:1px solid #707070;box-sizing:border-box;"></div>
<span class="t" style="top:631px;letter-spacing:0.164px;left:1570px;width:210px;text-align:center;text-indent:0.164px;">Сохранить сеанс</span>
<div style="left:1788px;top:625px;width:210px;height:32px;background:#dddddd;border:1px solid #707070;box-sizing:border-box;"></div>
<span class="t" style="top:631px;letter-spacing:0.213px;left:1788px;width:210px;text-align:center;text-indent:0.213px;">Сохранить raw данные</span>
<div style="left:2005px;top:625px;width:210px;height:32px;background:#dddddd;border:1px solid #707070;box-sizing:border-box;"></div>
<span class="t" style="top:631px;letter-spacing:0.211px;left:2005px;width:210px;text-align:center;text-indent:0.211px;">Сгенерировать .MAC</span>
<div style="left:2223px;top:625px;width:210px;height:32px;background:#dddddd;border:1px solid #707070;box-sizing:border-box;"></div>
<span class="t" style="top:631px;letter-spacing:0.305px;left:2223px;width:210px;text-align:center;text-indent:0.305px;">Сгенерировать листинг</span>
<span class="t" style="top:669px;letter-spacing:0.377px;left:530.10px;">Нижний адрес:</span>
<span class="t" style="top:694px;letter-spacing:0.377px;left:534.70px;">Нижний адрес:</span>
<div style="left:670px;top:665px;width:86px;height:27px;background:#fff;border:1px solid #d0d0d0;box-sizing:border-box;"></div>
<span class="t" style="top:669px;color:#8f8f8f;letter-spacing:0.114px;left:674.60px;">20040000</span>
<span class="t" style="top:694px;letter-spacing:0.114px;left:673.60px;">20040000</span>
<span class="t" style="top:669px;letter-spacing:0.142px;left:1006.10px;">Верхний адрес:</span>
<span class="t" style="top:694px;letter-spacing:0.142px;left:1010.70px;">Верхний адрес:</span>
<div style="left:1147px;top:665px;width:84px;height:27px;background:#fff;border:1px solid #d0d0d0;box-sizing:border-box;"></div>
<span class="t" style="top:669px;color:#8f8f8f;letter-spacing:-0.567px;left:1151.70px;">20043FFF</span>
<span class="t" style="top:694px;letter-spacing:-0.567px;left:1151.50px;">20043FFF</span>
<span class="t" style="top:669px;letter-spacing:0.125px;left:1479.70px;">Стартовый адрес:</span>
<span class="t" style="top:694px;letter-spacing:0.125px;left:1479.70px;">Стартовый адрес:</span>
<div style="left:1640px;top:665px;width:69px;height:27px;background:#fff;border:1px solid #abadb3;box-sizing:border-box;"></div>
<span class="t" style="top:669px;letter-spacing:0.339px;left:1993.10px;">Страница в/в:</span>
<span class="t" style="top:694px;letter-spacing:0.339px;left:1993.10px;">Страница в/в:</span>
<div style="left:2124px;top:669px;width:21px;height:19px;background:#fff;border:1px solid #707070;box-sizing:border-box;"></div>
<div style="left:2124px;top:694px;width:21px;height:20px;background:#e6e6e6;border:1px solid #bcbcbc;box-sizing:border-box;"></div>
<span class="t" style="top:669px;letter-spacing:0.092px;left:2431.30px;">Базовый адрес:</span>
<span class="t" style="top:694px;letter-spacing:0.092px;left:2435.60px;">Базовый адрес:</span>
<div style="left:2573px;top:665px;width:87px;height:27px;background:#fff;border:1px solid #abadb3;box-sizing:border-box;"></div>
<span class="t" style="top:669px;letter-spacing:0.139px;left:2577.90px;">20040000</span>
<span class="t" style="top:694px;letter-spacing:0.139px;left:2577.50px;">20040000</span>
<div style="left:404px;top:719px;width:586px;height:33px;background:#dddddd;border:1px solid #707070;box-sizing:border-box;"></div>
<span class="t" style="top:726px;letter-spacing:0.073px;left:404px;width:586px;text-align:center;text-indent:0.073px;">Ascii Byte (CtrlA)</span>
<div style="left:404px;top:752px;width:586px;height:33px;background:#dddddd;border:1px solid #707070;box-sizing:border-box;"></div>
<span class="t" style="top:759px;letter-spacing:-0.370px;left:404px;width:586px;text-align:center;text-indent:-0.370px;">ASCIZ (A)</span>
<div style="left:999px;top:719px;width:585px;height:33px;background:#dddddd;border:1px solid #707070;box-sizing:border-box;"></div>
<span class="t" style="top:726px;letter-spacing:-0.214px;left:999px;width:585px;text-align:center;text-indent:-0.214px;">Code (C)</span>
<div style="left:999px;top:752px;width:585px;height:33px;background:#dddddd;border:1px solid #707070;box-sizing:border-box;"></div>
<span class="t" style="top:759px;left:999px;width:585px;text-align:center;">Data (D)</span>
<div style="left:1593px;top:719px;width:586px;height:33px;background:#dddddd;border:1px solid #707070;box-sizing:border-box;"></div>
<span class="t" style="top:726px;letter-spacing:0.013px;left:1593px;width:586px;text-align:center;text-indent:0.013px;">Pointer To Code (S)</span>
<div style="left:1593px;top:752px;width:586px;height:33px;background:#dddddd;border:1px solid #707070;box-sizing:border-box;"></div>
<span class="t" style="top:759px;letter-spacing:0.050px;left:1593px;width:586px;text-align:center;text-indent:0.050px;">Pointer To Data (P)</span>
<div style="left:2188px;top:735px;width:585px;height:33px;background:#dddddd;border:1px solid #707070;box-sizing:border-box;"></div>
<span class="t" style="top:742px;letter-spacing:-0.108px;left:2188px;width:585px;text-align:center;text-indent:-0.108px;">Clear (Z)</span>
<span class="t" style="top:798px;letter-spacing:0.152px;left:1054.20px;">Pointer&#x27;s section:</span>
<div style="left:1194px;top:791px;width:786px;height:33px;background:linear-gradient(#f0f0f0,#e6e6e6);border:1px solid #d4d4d4;box-sizing:border-box;"></div>
<svg style="left:1959.5px;top:801.4px;width:12.6px;height:9.6px" viewBox="1959.5 801.4 12.6 9.6"><path d="M1962.5 804.4 L1965.8 808 L1969.1 804.4" fill="none" stroke="#606060" stroke-width="1.8"/></svg>
<div style="left:1988px;top:797px;width:21px;height:20px;background:#fff;border:1px solid #707070;box-sizing:border-box;"></div>
<span class="t" style="top:797px;letter-spacing:0.427px;left:2016.60px;">Not clear</span>
<div style="left:800px;top:827px;width:388px;height:33px;background:#dddddd;border:1px solid #707070;box-sizing:border-box;"></div>
<span class="t" style="top:834px;letter-spacing:0.466px;left:800px;width:388px;text-align:center;text-indent:0.466px;">Макрокоманда? (AltM)</span>
<div style="left:1593px;top:827px;width:387px;height:33px;background:#dddddd;border:1px solid #707070;box-sizing:border-box;"></div>
<span class="t" style="top:834px;letter-spacing:0.532px;left:1593px;width:387px;text-align:center;text-indent:0.532px;">Макро (CtrlM)</span>
<div style="left:1983px;top:827px;width:397px;height:33px;background:linear-gradient(#f0f0f0,#e5e5e5);border:1px solid #acacac;box-sizing:border-box;"></div>
<svg style="left:2359.5px;top:837.4px;width:12.6px;height:9.6px" viewBox="2359.5 837.4 12.6 9.6"><path d="M2362.5 840.4 L2365.8 844 L2369.1 840.4" fill="none" stroke="#606060" stroke-width="1.8"/></svg>
<div style="left:413px;top:863px;width:135px;height:37px;background:#fff;border:1px solid #b2b4ba;box-sizing:border-box;"></div>
<div style="left:563px;top:863px;width:2228px;height:37px;background:#fff;border:1px solid #b2b4ba;box-sizing:border-box;"></div>
<div style="left:398px;top:900px;width:1188px;height:245px;background:#fff;border:3px solid #1af0f0;box-sizing:border-box;border-bottom:none;"></div>
<div style="left:1586px;top:900px;width:2px;height:245px;background:#000;"></div>
<div style="left:403px;top:905px;width:1152px;height:29px;background:#cbe8f6;border:1px solid #3a96c8;box-sizing:border-box;"></div>
<div style="left:1555px;top:904px;width:26px;height:242px;background:#f0f0f0;"></div>
<svg style="left:1560.6px;top:912.6px;width:14.8px;height:11px" viewBox="1560.6 912.6 14.8 11"><path d="M1563.6 920.6 L1568 915.6 L1572.4 920.6" fill="none" stroke="#8a8a8a" stroke-width="2.5"/></svg>
<div style="left:1555px;top:931px;width:26px;height:12px;background:#cdcdcd;"></div>
<span class="t m" style="top:908px;left:878.40px;">.TITLE</span>
<span class="t m" style="top:908px;left:955.40px;">ka610</span>
<span class="t m" style="top:936px;left:878.40px;">.IDENT</span>
<span class="t m" style="top:936px;left:955.40px;">/01/</span>
<span class="t m" style="top:994px;left:410.20px;">20040000</span>
<span class="t m" style="top:994px;left:499.60px;">31</span>
<span class="t m" style="top:994px;left:543.60px;">/1/</span>
<span class="t m" style="top:994px;left:878.40px;">.BYTE</span>
<span class="t m" style="top:994px;left:955.40px;">^X&lt;31&gt;</span>
<span class="t m" style="top:1023px;left:410.20px;">20040001</span>
<span class="t m" style="top:1023px;left:499.60px;">26</span>
<span class="t m" style="top:1023px;left:543.60px;">/&amp;/</span>
<span class="t m" style="top:1023px;left:878.40px;">.BYTE</span>
<span class="t m" style="top:1023px;left:955.40px;">^X&lt;26&gt;</span>
<span class="t m" style="top:1052px;left:410.20px;">20040002</span>
<span class="t m" style="top:1052px;left:499.60px;">01</span>
<span class="t m" style="top:1052px;left:543.60px;">&lt;1&gt;</span>
<span class="t m" style="top:1052px;left:878.40px;">.BYTE</span>
<span class="t m" style="top:1052px;left:955.40px;">^X&lt;1&gt;</span>
<span class="t m" style="top:1080px;left:410.20px;">20040003</span>
<span class="t m" style="top:1080px;left:499.60px;">06</span>
<span class="t m" style="top:1080px;left:543.60px;">&lt;6&gt;</span>
<span class="t m" style="top:1080px;left:878.40px;">.BYTE</span>
<span class="t m" style="top:1080px;left:955.40px;">^X&lt;6&gt;</span>
<span class="t m" style="top:1109px;left:410.20px;">20040004</span>
<span class="t m" style="top:1109px;left:499.60px;">80</span>
<span class="t m" style="top:1109px;left:543.60px;">&lt;200&gt;</span>
<span class="t m" style="top:1109px;left:878.40px;">.BYTE</span>
<span class="t m" style="top:1109px;left:955.40px;">^X&lt;80&gt;</span>
<span class="t m" style="top:1138px;left:410.20px;">20040005</span>
<span class="t m" style="top:1138px;left:499.60px;">21</span>
<span class="t m" style="top:1138px;left:543.60px;">&lt;21&gt;</span>
<span class="t m" style="top:1138px;left:878.40px;">.BYTE</span>
<span class="t m" style="top:1138px;left:955.40px;">^X&lt;21&gt;</span>
<div style="left:1589px;top:930px;width:165px;height:215px;background:#fff;border:3px solid #abadb3;box-sizing:border-box;border-bottom:none;"></div>
<div style="left:1589px;top:900px;width:165px;height:30px;background:#dddddd;border:1px solid #707070;box-sizing:border-box;"></div>
<span class="t" style="top:905px;letter-spacing:0.214px;left:1589px;width:165px;text-align:center;text-indent:0.214px;">JumpTo</span>
<div style="left:1754px;top:900px;width:1022px;height:187px;background:#fff;border:3px solid #abadb3;box-sizing:border-box;"></div>
<div style="left:1758px;top:904px;width:988px;height:29px;background:#f5f5f5;border:1px solid #dadada;box-sizing:border-box;"></div>
<div style="left:2746px;top:904px;width:26px;height:180px;background:#f0f0f0;"></div>
<svg style="left:2751.6px;top:912.6px;width:14.8px;height:11px" viewBox="2751.6 912.6 14.8 11"><path d="M2754.6 920.6 L2759 915.6 L2763.4 920.6" fill="none" stroke="#8a8a8a" stroke-width="2.5"/></svg>
<div style="left:2746px;top:931px;width:26px;height:12px;background:#cdcdcd;"></div>
<svg style="left:2751.6px;top:1064.5px;width:14.8px;height:11px" viewBox="2751.6 1064.5 14.8 11"><path d="M2754.6 1067.5 L2759 1072.5 L2763.4 1067.5" fill="none" stroke="#8a8a8a" stroke-width="2.5"/></svg>
<span class="t m" style="top:908px;left:2233.70px;">.TITLE</span>
<span class="t m" style="top:908px;left:2310.70px;">ka610</span>
<span class="t m" style="top:936px;left:2233.70px;">.IDENT</span>
<span class="t m" style="top:936px;left:2310.70px;">/01/</span>
<span class="t m" style="top:994px;left:1765.50px;">20040000</span>
<span class="t m" style="top:994px;left:1854.90px;">31</span>
<span class="t m" style="top:994px;left:1898.90px;">/1/</span>
<span class="t m" style="top:994px;left:2233.70px;">.BYTE</span>
<span class="t m" style="top:994px;left:2310.70px;">^X&lt;31&gt;</span>
<span class="t m" style="top:1023px;left:1765.50px;">20040001</span>
<span class="t m" style="top:1023px;left:1854.90px;">26</span>
<span class="t m" style="top:1023px;left:1898.90px;">/&amp;/</span>
<span class="t m" style="top:1023px;left:2233.70px;">.BYTE</span>
<span class="t m" style="top:1023px;left:2310.70px;">^X&lt;26&gt;</span>
<span class="t m" style="top:1052px;left:1765.50px;">20040002</span>
<span class="t m" style="top:1052px;left:1854.90px;">01</span>
<span class="t m" style="top:1052px;left:1898.90px;">&lt;1&gt;</span>
<span class="t m" style="top:1052px;left:2233.70px;">.BYTE</span>
<span class="t m" style="top:1052px;left:2310.70px;">^X&lt;1&gt;</span>
<div style="left:1754px;top:1090px;width:1022px;height:70px;background:#fff;border:3px solid #abadb3;box-sizing:border-box;border-bottom:none;"></div>
<div style="left:1758px;top:1094px;width:988px;height:29px;background:#f5f5f5;border:1px solid #dadada;box-sizing:border-box;"></div>
<div style="left:2746px;top:1094px;width:26px;height:67px;background:#f0f0f0;"></div>
<svg style="left:2751.6px;top:1102.6px;width:14.8px;height:11px" viewBox="2751.6 1102.6 14.8 11"><path d="M2754.6 1110.6 L2759 1105.6 L2763.4 1110.6" fill="none" stroke="#8a8a8a" stroke-width="2.5"/></svg>
<div style="left:2746px;top:1121px;width:26px;height:12px;background:#cdcdcd;"></div>
<span class="t m" style="top:1097px;left:2233.70px;">.TITLE</span>
<span class="t m" style="top:1097px;left:2310.70px;">ka610</span>
<span class="t m" style="top:1126px;left:2233.70px;">.IDENT</span>
<span class="t m" style="top:1126px;left:2310.70px;">/01/</span>
<div style="left:1754px;top:1087px;width:1100px;height:3px;background:#000;"></div>
<svg style="left:0;top:0;width:2775px;height:1145px" viewBox="0 0 2775 1145">
<path d="M381 254 C381 251 384 250.5 407 248.8 L453 246 L500 244.2 L558 243.3 L640 243.3 L960 244.8 L1300 244.6 L1750 245 L1886 247.5 L1967 250.5 L1993 251.8 Q1998 252.2 1998 256 L1998 292 Q1998 296.6 1993 297.2 L1967 298.7 L1913 300.9 L1858 302.8 L1804 304 L1750 304.5 L1300 303.3 L960 303.7 L709 304.2 L593 305.4 L535 305.4 L490 303 L453 301.4 L407 299.1 L388 297 Q381 296 381 290 Z" fill="none" stroke="#ed1c24" stroke-width="4.8" stroke-linejoin="round"/>
<path d="M780.5 829 C780.5 827 783 826 806.6 823.3 L853 821 L900 819.3 L958 818.6 L1040 818.6 L1360 819.8 L1700 819.9 L2100 819.8 L2237 819.3 L2306 820.8 L2375 822.9 L2407 824.5 Q2412.5 825 2412.5 829 L2412.5 859 Q2412.5 863.2 2407 863.6 L2375 865.8 L2306 868.6 L2237 870 L2169 870.8 L2100 870.8 L1700 869.5 L1360 869.3 L1040 869.2 L923 869.2 L853 868 L806.6 865.9 L787 863.6 Q780 862.5 780 857 Z" fill="none" stroke="#ed1c24" stroke-width="4.8" stroke-linejoin="round"/>
</svg>
</div></body></html>
